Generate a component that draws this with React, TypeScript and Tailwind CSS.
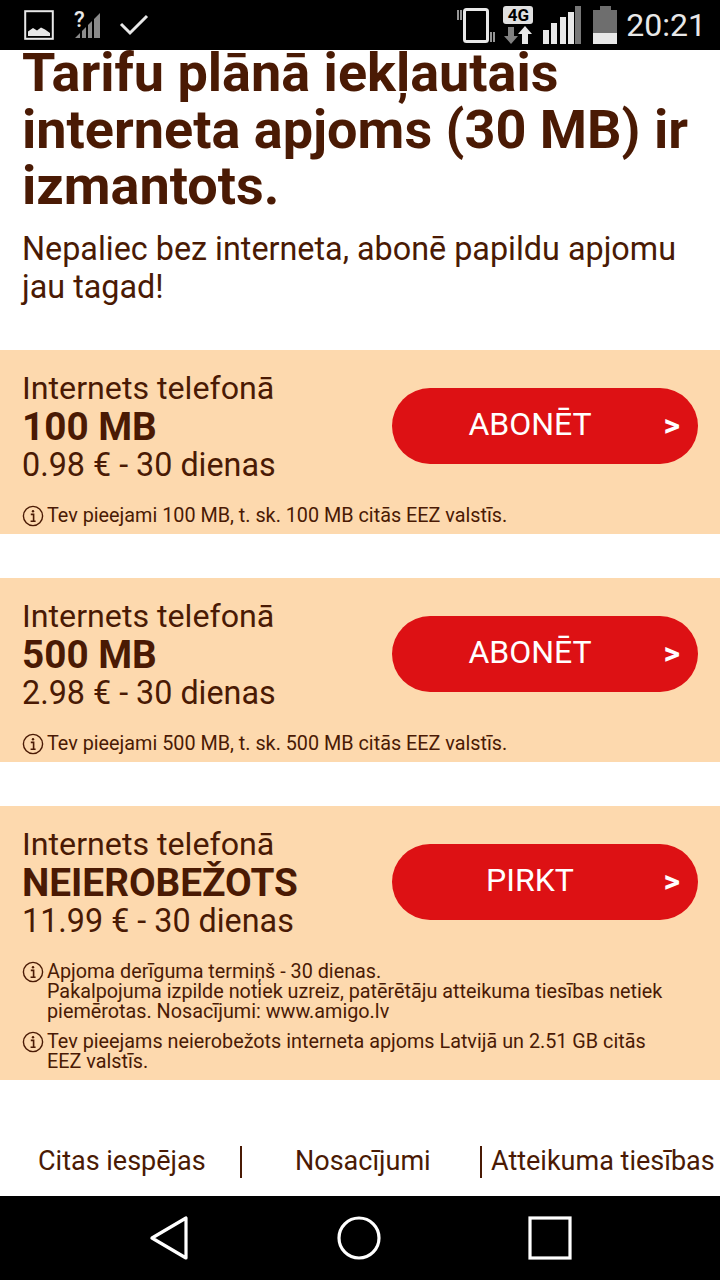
import React from "react";

function InfoIcon() {
  return (
    <svg viewBox="0 0 22 22" className="-my-px h-[22px] w-[22px] shrink-0" fill="none" stroke="#4a1a04">
      <circle cx="11" cy="11" r="9.6" strokeWidth="1.4" />
      <circle cx="11" cy="6.2" r="1.2" fill="#4a1a04" stroke="none" />
      <path d="M8.8 9.4h2.8v6.6M8.6 16.2h5" strokeWidth="1.6" />
    </svg>
  );
}

function StatusBar() {
  return (
    <div className="relative z-10 flex h-[50px] shrink-0 items-center justify-between bg-black pl-6 pr-[14px]">
      <div className="flex items-center">
        <svg viewBox="0 0 30 30" className="h-[30px] w-[30px]">
          <rect x="1.2" y="1.2" width="27.6" height="27.6" fill="none" stroke="#e8e8e8" strokeWidth="2" />
          <path d="M4 26v-4.5l5-3.5 4 2.5 4-3 4 2 5 3.5v3z" fill="#e8e8e8" />
        </svg>
        <svg viewBox="0 0 28 30" className="ml-[20px] h-[30px] w-[28px] overflow-visible">
          <path d="M1 28 L6 23 V28Z M8 21 L12 17 V28 H8Z M14 15 L18 11 V28 H14Z M20 9 L26 3 V28 H20Z" fill="#8a8a8a" />
          <text x="0" y="17" fill="#e8e8e8" fontSize="22" fontWeight="500" fontFamily="Roboto, sans-serif">?</text>
        </svg>
        <svg viewBox="0 0 30 24" className="ml-[17px] h-[24px] w-[30px]">
          <path d="M2 11 L11 20 L28 3" fill="none" stroke="#e8e8e8" strokeWidth="3" />
        </svg>
      </div>
      <div className="flex items-center">
        <svg viewBox="0 0 40 40" className="h-[40px] w-[40px]">
          <rect x="8.5" y="4.5" width="23" height="32" rx="2" fill="none" stroke="#e8e8e8" strokeWidth="3" />
          <path d="M2 5v10M5 5v10M35 27v10M38 27v10" stroke="#c8c8c8" strokeWidth="1.5" />
        </svg>
        <div className="ml-[7px] flex w-[30px] flex-col items-center">
          <div className="flex h-[18px] w-[30px] items-center justify-center rounded-[3px] bg-[#e0e0e0] font-['Roboto',sans-serif] text-[17px] leading-none font-bold text-black">
            4G
          </div>
          <svg viewBox="0 0 30 18" className="mt-[2px] h-[18px] w-[30px]">
            <path d="M8 18 L1 10 H5 V1 H11 V10 H15Z" fill="#808080" />
            <path d="M22 0 L29 8 H25 V18 H19 V8 H15Z" fill="#e8e8e8" />
          </svg>
        </div>
        <svg viewBox="0 0 38 38" className="ml-[10px] h-[38px] w-[38px]">
          <rect x="0" y="24" width="6" height="14" fill="#e8e8e8" />
          <rect x="8" y="17" width="6" height="21" fill="#e8e8e8" />
          <rect x="17" y="11" width="6" height="27" fill="#e8e8e8" />
          <rect x="25" y="6" width="6" height="32" fill="#e8e8e8" />
          <rect x="32" y="0" width="6" height="38" fill="#777777" />
        </svg>
        <svg viewBox="0 0 24 38" className="ml-[12px] h-[38px] w-[24px]">
          <path d="M7 0h11v4h6v23H0V4h7z" fill="#6e6e6e" />
          <rect x="0" y="27" width="24" height="11" fill="#e8e8e8" />
        </svg>
        <span className="ml-[9px] font-['Roboto',sans-serif] text-[32px] leading-none text-[#e8e8e8]">
          20:21
        </span>
      </div>
    </div>
  );
}

function PlanCard({
  size,
  price,
  action,
  notes,
}: {
  size: string;
  price: string;
  action: string;
  notes: string[];
}) {
  return (
    <section className="bg-[#fdd9ae] pl-[22px] pr-[22px]">
      <div className="flex items-center justify-between pt-[19px]">
        <div>
          <p className="text-[32.2px] leading-[38px]">Internets telefonā</p>
          <p className="text-[38.7px] leading-[39px] font-bold">{size}</p>
          <p className="text-[32.3px] leading-[38px]">{price}</p>
        </div>
        <button className="relative -mt-[2px] flex h-[76px] w-[306px] items-center justify-center rounded-full bg-[#dd1114] text-[32px] text-white">
          <span className="pr-[30px] pb-[3px]">{action}</span>
          <span className="absolute right-[18px] pb-[2px] text-[32px] font-bold">&gt;</span>
        </button>
      </div>
      <div className="mt-[22px] flex flex-col gap-[10px] pb-[8px]">
        {notes.map((n) => (
          <div key={n} className="flex items-start gap-[3px]">
            <InfoIcon />
            <p className="whitespace-pre-line text-[19.8px] leading-[20px]">{n}</p>
          </div>
        ))}
      </div>
    </section>
  );
}

export default function App() {
  return (
    <div className="flex h-[1280px] w-[720px] flex-col overflow-hidden bg-white font-['Roboto',sans-serif] text-[#4a1a04]">
      <StatusBar />
      <main className="min-h-0 flex-1">
        <div className="-mt-[5px] px-[22px]">
          <h1 className="text-[54px] leading-[56.5px] font-bold">
            Tarifu plānā iekļautais
            <br />
            interneta apjoms (30 MB) ir
            <br />
            izmantots.
          </h1>
          <p className="mt-[15.5px] text-[32.35px] leading-[38px]">
            Nepaliec bez interneta, abonē papildu apjomu
            <br />
            jau tagad!
          </p>
        </div>
        <div className="mt-[44px] flex flex-col gap-[44px]">
          <PlanCard
            size="100 MB"
            price="0.98 € - 30 dienas"
            action="ABONĒT"
            notes={["Tev pieejami 100 MB, t. sk. 100 MB citās EEZ valstīs."]}
          />
          <PlanCard
            size="500 MB"
            price="2.98 € - 30 dienas"
            action="ABONĒT"
            notes={["Tev pieejami 500 MB, t. sk. 500 MB citās EEZ valstīs."]}
          />
          <PlanCard
            size="NEIEROBEŽOTS"
            price="11.99 € - 30 dienas"
            action="PIRKT"
            notes={[
              "Apjoma derīguma termiņš - 30 dienas.\nPakalpojuma izpilde notiek uzreiz, patērētāju atteikuma tiesības netiek\npiemērotas. Nosacījumi: www.amigo.lv",
              "Tev pieejams neierobežots interneta apjoms Latvijā un 2.51 GB citās\nEEZ valstīs.",
            ]}
          />
        </div>
      </main>
      <footer className="mb-[18px] flex h-[32px] shrink-0 items-center text-[27px] leading-[30px]">
        <span className="w-[242px] border-r-2 border-[#4a1a04] pb-[2px] pl-[38px] whitespace-nowrap">Citas iespējas</span>
        <span className="w-[240px] border-r-2 border-[#4a1a04] pb-[2px] pl-[53px] whitespace-nowrap">Nosacījumi</span>
        <span className="pb-[2px] pl-[9px] whitespace-nowrap">Atteikuma tiesības</span>
      </footer>
      <nav className="flex h-[84px] shrink-0 items-center bg-black pl-[150px]">
        <svg viewBox="0 0 38 44" className="h-[44px] w-[38px]">
          <path d="M36 2 V42 L2 22Z" fill="none" stroke="white" strokeWidth="3.2" strokeLinejoin="round" />
        </svg>
        <svg viewBox="0 0 44 44" className="ml-[149px] h-[44px] w-[44px]">
          <circle cx="22" cy="22" r="20" fill="none" stroke="white" strokeWidth="3.2" />
        </svg>
        <svg viewBox="0 0 44 44" className="ml-[147px] h-[44px] w-[44px]">
          <rect x="2" y="2" width="40" height="40" fill="none" stroke="white" strokeWidth="3.2" />
        </svg>
      </nav>
    </div>
  );
}
